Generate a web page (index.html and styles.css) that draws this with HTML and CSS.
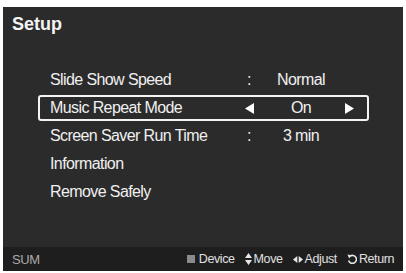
FILE: index.html
```html
<!DOCTYPE html>
<html>
<head>
<meta charset="utf-8">
<link rel="stylesheet" href="styles.css">
</head>
<body>
<div class="panel">
  <div class="title">Setup</div>
  <div class="list">
    <div class="row">
      <span class="label">Slide Show Speed</span>
      <span class="sep">:</span>
      <span class="value">Normal</span>
      <span class="sep2"></span>
    </div>
    <div class="row active">
      <span class="label">Music Repeat Mode</span>
      <span class="sep arrow"><svg width="9" height="11" viewBox="0 0 9 11"><path d="M0 5.5 L9 0 V11 Z" fill="#fff"/></svg></span>
      <span class="value">On</span>
      <span class="sep2 arrow"><svg width="9" height="11" viewBox="0 0 9 11"><path d="M9 5.5 L0 0 V11 Z" fill="#fff"/></svg></span>
    </div>
    <div class="row">
      <span class="label">Screen Saver Run Time</span>
      <span class="sep">:</span>
      <span class="value">3 min</span>
      <span class="sep2"></span>
    </div>
    <div class="row">
      <span class="label">Information</span>
    </div>
    <div class="row">
      <span class="label">Remove Safely</span>
    </div>
  </div>
  <div class="footer">
    <span class="sum">SUM</span>
    <div class="keys">
      <span class="key"><span class="sq"></span>Device</span>
      <span class="key"><svg class="ico" width="7" height="12" viewBox="0 0 7 12"><path d="M3.5 0 L7 5 H0 Z M0 7 H7 L3.5 12 Z" fill="#e6e6e6"/></svg>Move</span>
      <span class="key"><svg class="ico" width="10" height="7" viewBox="0 0 10 7"><path d="M0 3.5 L4.3 0 V7 Z M10 3.5 L5.7 0 V7 Z" fill="#e6e6e6"/></svg>Adjust</span>
      <span class="key"><svg class="ico" width="10" height="10" viewBox="0 0 10 10"><path d="M3 2.2 A4 4 0 1 1 1.6 6.5" fill="none" stroke="#e6e6e6" stroke-width="1.6"/><path d="M0.4 0.6 L4.6 1.2 L2.2 4.6 Z" fill="#e6e6e6"/></svg>Return</span>
    </div>
  </div>
</div>
</body>
</html>
```
FILE: styles.css
```css
html, body {
  margin: 0;
  padding: 0;
  background: #ffffff;
}
body {
  font-family: "Liberation Sans", Arial, sans-serif;
}
.panel {
  margin: 7px 0 0 3px;
  width: 400px;
  height: 264px;
  background: #2c2b2c;
  display: flex;
  flex-direction: column;
  color: #f2f2f2;
}
.title {
  padding: 6px 9px 0;
  font-size: 18px;
  line-height: 22px;
  font-weight: bold;
  color: #f4f4f4;
}
.list {
  margin: 32px 0 0 35px;
  width: 331px;
  display: flex;
  flex-direction: column;
  gap: 2px;
}
.row {
  height: 26px;
  box-sizing: border-box;
  border: 2px solid transparent;
  border-radius: 3px;
  display: grid;
  grid-template-columns: 186px 26px 78px 18px;
  align-items: center;
  padding-left: 10px;
  font-size: 16px;
  letter-spacing: -0.6px;
  color: #f0f0f0;
}
.row.active {
  border-color: #f4f4f4;
}
.sep {
  text-align: center;
}
.value {
  text-align: center;
}
.sep2 {
  text-align: center;
}
.arrow {
  display: flex;
  justify-content: center;
  align-items: center;
}
.arrow svg {
  display: block;
}
.footer {
  margin-top: auto;
  height: 24px;
  background: #1f1e1f;
  display: flex;
  align-items: center;
  justify-content: space-between;
  padding: 0 9px;
  font-size: 12.5px;
  letter-spacing: -0.4px;
}
.sum {
  color: #a9a9a9;
  font-size: 13px;
}
.keys {
  display: flex;
  align-items: center;
  gap: 10px;
  color: #e0e0e0;
}
.key {
  display: flex;
  align-items: center;
  gap: 2px;
}
.sq {
  width: 8px;
  height: 8px;
  background: #8a8a8a;
  margin-right: 2px;
}
.ico {
  display: block;
}
```
